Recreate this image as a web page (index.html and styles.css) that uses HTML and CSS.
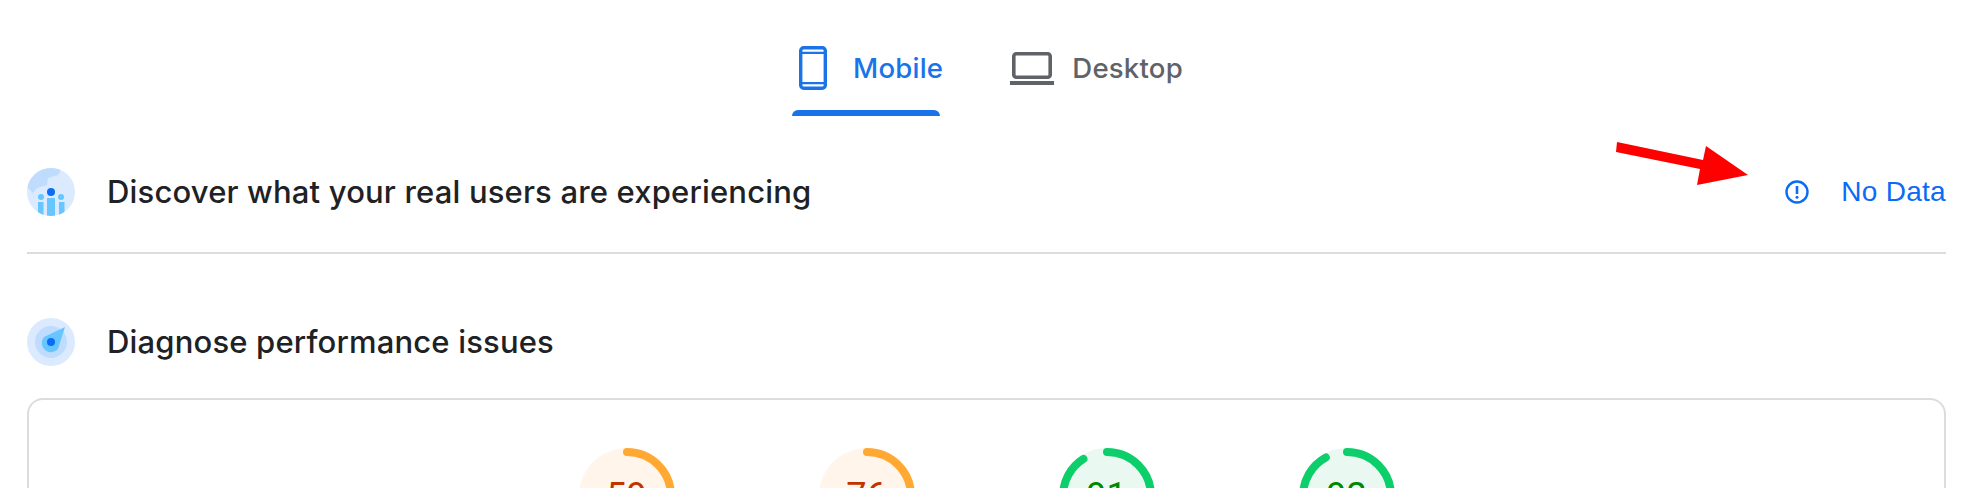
FILE: index.html
```html
<!DOCTYPE html>
<html lang="en">
<head>
<meta charset="utf-8">
<title>PageSpeed Insights</title>
<link rel="stylesheet" href="styles.css">
</head>
<body>
<nav class="tabs">
  <div class="tab tab-active">
    <svg class="tab-icon" width="46" height="44" viewBox="0 0 46 44"><rect x="11.700" y="1.700" width="24.600" height="40.600" rx="3" fill="none" stroke="#1a73e8" stroke-width="3.400"/><path d="M11 6.800h26M11 37.200h26" stroke="#1a73e8" stroke-width="2.200" fill="none"/></svg>
    <span>Mobile</span>
  </div>
  <div class="tab">
    <svg class="tab-icon" width="44" height="44" viewBox="0 0 44 44"><rect x="3.800" y="7.800" width="36.400" height="23.400" rx="2.500" fill="none" stroke="#5f6368" stroke-width="3.600"/><path d="M0 37h44" stroke="#5f6368" stroke-width="4" fill="none"/></svg>
    <span>Desktop</span>
  </div>
</nav>
<main class="content">
  <section class="field-row">
    <svg class="sec-icon" width="48" height="48" viewBox="0 0 48 48">
      <defs><clipPath id="c1"><circle cx="24" cy="24" r="24"/></clipPath></defs>
      <circle cx="24" cy="24" r="24" fill="#dbeafe"/>
      <path clip-path="url(#c1)" d="M0 0H33V4L31 7 21 10 20 17 10 20 6 25 0 19Z" fill="#bfdcff"/>
      <path clip-path="url(#c1)" d="M11 34h5.500v16h-5.500zM20 30h8v20h-8zM32 34h5.500v16h-5.500z" fill="#67c5ff"/>
      <circle cx="14" cy="29" r="3" fill="#67c5ff"/>
      <circle cx="34" cy="29" r="3" fill="#67c5ff"/>
      <circle cx="24" cy="24" r="4" fill="#0b6cf5"/>
    </svg>
    <h2 class="sec-title">Discover what your real users are experiencing</h2>
    <div class="status">
      <svg width="24" height="24" viewBox="0 0 24 24"><circle cx="12" cy="12" r="10.500" fill="none" stroke="#0a6cf5" stroke-width="2.400"/><path d="M12 6v8" stroke="#0a6cf5" stroke-width="2.600"/><circle cx="12" cy="17.200" r="1.500" fill="#0a6cf5"/></svg>
      <span class="status-text">No Data</span>
    </div>
  </section>
  <section class="diag-row">
    <svg class="sec-icon" width="48" height="48" viewBox="0 0 48 48">
      <circle cx="24" cy="24" r="24" fill="#dbeafe"/>
      <circle cx="24" cy="24" r="16" fill="#bfdcff"/>
      <path d="M38 9 31 31A8 8 0 0 1 17 19Z" fill="#67c5ff"/>
      <circle cx="24" cy="24" r="4" fill="#0b6cf5"/>
    </svg>
    <h2 class="sec-title">Diagnose performance issues</h2>
  </section>
  <section class="card">
    <div class="gauges">
      <div class="gauge gauge-mid"><svg width="96" height="96" viewBox="0 0 96 96"><circle class="g-base" cx="48" cy="48" r="48"/><circle class="g-arc" cx="48" cy="48" r="44" pathLength="100" stroke-dasharray="59 100" transform="rotate(-90 48 48)"/></svg><span class="score">59</span></div>
      <div class="gauge gauge-mid"><svg width="96" height="96" viewBox="0 0 96 96"><circle class="g-base" cx="48" cy="48" r="48"/><circle class="g-arc" cx="48" cy="48" r="44" pathLength="100" stroke-dasharray="76 100" transform="rotate(-90 48 48)"/></svg><span class="score">76</span></div>
      <div class="gauge gauge-good"><svg width="96" height="96" viewBox="0 0 96 96"><circle class="g-base" cx="48" cy="48" r="48"/><circle class="g-arc" cx="48" cy="48" r="44" pathLength="100" stroke-dasharray="91 100" transform="rotate(-90 48 48)"/></svg><span class="score">91</span></div>
      <div class="gauge gauge-good"><svg width="96" height="96" viewBox="0 0 96 96"><circle class="g-base" cx="48" cy="48" r="48"/><circle class="g-arc" cx="48" cy="48" r="44" pathLength="100" stroke-dasharray="92 100" transform="rotate(-90 48 48)"/></svg><span class="score">92</span></div>
    </div>
  </section>
</main>
<svg class="arrow" width="140" height="50" viewBox="0 0 140 50"><polygon points="2,2 1,12 85,29 82,45 133,35 91,6 88,20" fill="#ff0000"/></svg>
</body>
</html>
```
FILE: styles.css
```css
* { box-sizing: border-box; }
html, body { margin: 0; height: 488px; overflow: hidden; background: #fff; }
body { position: relative; font-family: Inter, "Liberation Sans", sans-serif; color: #202124; }
.tabs { display: flex; justify-content: center; gap: 67px; height: 116px; padding-right: 8px; }
.tab { position: relative; display: flex; align-items: center; gap: 18px; height: 116px; padding-top: 20px; color: #5f6368; font-size: 27.6px; font-weight: 500; letter-spacing: 0.2px; }
.tab-active { color: #1a73e8; }
.tab-active::after { content: ""; position: absolute; left: 3px; right: 3px; bottom: 0; height: 6px; background: #1a73e8; border-radius: 6px 6px 0 0; }
.tab-icon { display: block; flex: none; }
.content { padding: 0 34px 0 27px; }
.field-row { display: flex; align-items: center; height: 138px; padding-top: 38px; padding-bottom: 22px; border-bottom: 2px solid #dadce0; }
.sec-icon { flex: none; }
.sec-title { margin: 0 0 0 32px; padding-bottom: 2px; font-size: 31px; font-weight: 500; letter-spacing: 0.17px; color: #202124; }
.status { margin-left: auto; display: flex; align-items: center; gap: 32px; }
.status svg { display: block; }
.status-text { font-family: "Liberation Sans", Arial, sans-serif; font-size: 28px; letter-spacing: 0.3px; color: #0a6cf5; }
.diag-row { display: flex; align-items: center; height: 48px; margin-top: 64px; }
.card { margin-top: 32px; height: 200px; border: 2px solid #dadce0; border-bottom: 0; border-radius: 16px 16px 0 0; display: flex; justify-content: center; padding-top: 48px; }
.gauges { display: flex; }
.gauge { position: relative; width: 240px; height: 96px; display: flex; justify-content: center; }
.g-base { fill: var(--gauge-bg); }
.g-arc { fill: none; stroke: var(--gauge-fg); stroke-width: 8; stroke-linecap: round; }
.gauge-mid { --gauge-bg: #fff5ea; --gauge-fg: #ffa933; --gauge-text: #c33300; }
.gauge-good { --gauge-bg: #e9f8f0; --gauge-fg: #0cce6b; --gauge-text: #008800; }
.score { position: absolute; left: 0; right: 0; top: 30px; text-align: center; font-family: Roboto, "Liberation Sans", sans-serif; font-size: 36px; line-height: 36px; color: var(--gauge-text); }
.arrow { position: absolute; left: 1615px; top: 140px; }
```
